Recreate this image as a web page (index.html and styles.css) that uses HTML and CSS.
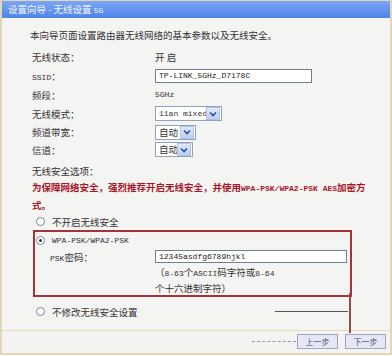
FILE: index.html
```html
<!DOCTYPE html>
<html lang="zh-CN">
<head>
    <meta charset="UTF-8">
    <title>设置向导 - 无线设置 5G</title>
    <link rel="stylesheet" href="styles.css">
</head>
<body>
    <section class="wizard">
        <div class="title">设置向导 - 无线设置 <span class="en">5G</span></div>
        <section class="main">
            <p class="intro">本向导页面设置路由器无线网络的基本参数以及无线安全。</p>
            <div class="form">
                <div class="row r19"><span class="label">无线状态：</span><span>开 启</span></div>
                <div class="row r19"><span class="label"><span class="en">SSID</span>：</span><span class="input ssid en">TP-LINK_5GHz_D7178C</span></div>
                <div class="row r19"><span class="label">频段：</span><span class="en">5GHz</span></div>
                <div class="row r19"><span class="label">无线模式：</span><span class="select w67"><span class="val en">11an mixed</span><span class="arrow"><svg width="8" height="6" viewBox="0 0 8 6"><path d="M1 1.5 L4 4.5 L7 1.5" fill="none" stroke="#2c4f9a" stroke-width="1.6"/></svg></span></span></div>
                <div class="row r18"><span class="label">频道带宽：</span><span class="select w41"><span class="val">自动</span><span class="arrow"><svg width="8" height="6" viewBox="0 0 8 6"><path d="M1 1.5 L4 4.5 L7 1.5" fill="none" stroke="#2c4f9a" stroke-width="1.6"/></svg></span></span></div>
                <div class="row r17"><span class="label">信道：</span><span class="select w38"><span class="val">自动</span><span class="arrow"><svg width="8" height="6" viewBox="0 0 8 6"><path d="M1 1.5 L4 4.5 L7 1.5" fill="none" stroke="#2c4f9a" stroke-width="1.6"/></svg></span></span></div>
            </div>
            <p class="sec-title">无线安全选项：</p>
            <p class="warn">为保障网络安全，强烈推荐开启无线安全，并使用<span class="en">WPA-PSK/WPA2-PSK AES</span>加密方<br>式。</p>
            <div class="option first"><span class="radio"></span>不开启无线安全</div>
            <div class="box">
                <div class="option in"><span class="radio on"></span><span class="en">WPA-PSK/WPA2-PSK</span></div>
                <div class="row psk"><span class="label"><span class="en">PSK</span>密码：</span><span class="input pwd en">12345asdfg6789hjkl</span></div>
                <div class="row hint"><span class="label"></span><span>（<span class="en">8-63</span>个<span class="en">ASCII</span>码字符或<span class="en">8-64</span><br>个十六进制字符）</span></div>
            </div>
            <div class="option last"><span class="radio"></span>不修改无线安全设置</div>
        </section>
        <div class="footer">
            <span class="btn">上一步</span>
            <span class="btn">下一步</span>
            <span class="mark vline"></span>
            <span class="mark hline"></span>
            <span class="mark dash"></span>
        </div>
    </section>
</body>
</html>
```

FILE: styles.css
```css
body {
    margin: 0;
    padding: 0;
    font-family: "Noto Sans CJK SC", sans-serif;
    font-size: 9.5px;
    color: #333;
    background: #fff;
}

p {
    margin: 0;
}

.en {
    font-family: "Liberation Mono", monospace;
    font-size: 8px;
}

.wizard {
    width: 392px;
    height: 355px;
    box-sizing: border-box;
    border: 2px solid #e3d6b4;
    border-top-width: 1px;
    background: #f4f4f2;
    display: flex;
    flex-direction: column;
}

.title {
    height: 17px;
    line-height: 17px;
    padding-left: 6px;
    color: #f2f6ff;
    background: linear-gradient(#7aa6f4, #5084e8);
}

.title .en {
    font-size: 8px;
}

.main {
    flex: 1;
    padding: 9px 0 0 30px;
}

.intro {
    line-height: 16px;
    margin-left: -2px;
}

.form {
    margin-top: 4px;
}

.row {
    display: flex;
    align-items: center;
}

.r19 { height: 19px; }
.r18 { height: 18px; }
.r17 { height: 17px; }

.label {
    width: 123px;
    flex: none;
}

.input {
    box-sizing: border-box;
    height: 14px;
    line-height: 12px;
    padding-left: 3px;
    background: #fff;
    border: 1px solid #6f7f90;
    color: #222;
    white-space: nowrap;
}

.ssid {
    width: 157px;
}

.select {
    box-sizing: border-box;
    height: 15px;
    display: flex;
    align-items: center;
    background: #fff;
    border: 1px solid #8fa3bb;
    white-space: nowrap;
}

.select .val {
    flex: 1;
    min-width: 0;
    overflow: hidden;
    padding-left: 3px;
    line-height: 13px;
}

.select .arrow {
    flex: none;
    width: 12px;
    height: 11px;
    margin-right: 1px;
    display: flex;
    align-items: center;
    justify-content: center;
    background: linear-gradient(#dfe9fb, #bccff2);
    border: 1px solid #b0c2e2;
}

.w67 { width: 67px; }
.w41 { width: 41px; }
.w38 { width: 38px; }

.sec-title {
    margin-top: 5px;
    line-height: 16px;
}

.warn {
    line-height: 16px;
    color: #a8162a;
    font-weight: bold;
    white-space: nowrap;
}

.option {
    height: 17px;
    display: flex;
    align-items: center;
    padding-left: 4px;
}

.option.last {
    margin-top: 6px;
}

.radio {
    width: 9px;
    height: 9px;
    box-sizing: border-box;
    border: 1px solid #7a8796;
    border-radius: 50%;
    background: #fff;
    margin-right: 7px;
    display: flex;
    align-items: center;
    justify-content: center;
}

.radio.on::after {
    content: "";
    width: 3px;
    height: 3px;
    border-radius: 50%;
    background: #333;
}

.box {
    width: 319px;
    box-sizing: border-box;
    margin-left: 1px;
    border: 2px solid #a4343c;
}

.option.in {
    height: 16px;
    padding-left: 1px;
}

.box .label {
    width: 105px;
    padding-left: 15px;
}

.psk {
    height: 17px;
}

.pwd {
    width: 192px;
    height: 13px;
    line-height: 11px;
}

.hint {
    line-height: 14px;
    align-items: flex-start;
}

.footer {
    position: relative;
    height: 19px;
    border-top: 1px solid #eadcb8;
    display: flex;
    justify-content: flex-end;
    align-items: flex-start;
    gap: 7px;
    padding: 3px 4px 0 0;
    background: #f3f3f1;
}

.btn {
    width: 41px;
    height: 15px;
    box-sizing: border-box;
    line-height: 13px;
    text-align: center;
    font-size: 8px;
    color: #4a4f70;
    background: #e6e8f6;
    border: 1px solid #9ea4c4;
}

.mark {
    position: absolute;
}

.vline {
    left: 347px;
    top: -38px;
    width: 2px;
    height: 40px;
    background: #9a4a4a;
}

.hline {
    left: 273px;
    top: -20px;
    width: 73px;
    height: 1px;
    background: #555;
}

.dash {
    left: 250px;
    top: 10px;
    width: 44px;
    border-top: 1px dashed #999;
}
```
